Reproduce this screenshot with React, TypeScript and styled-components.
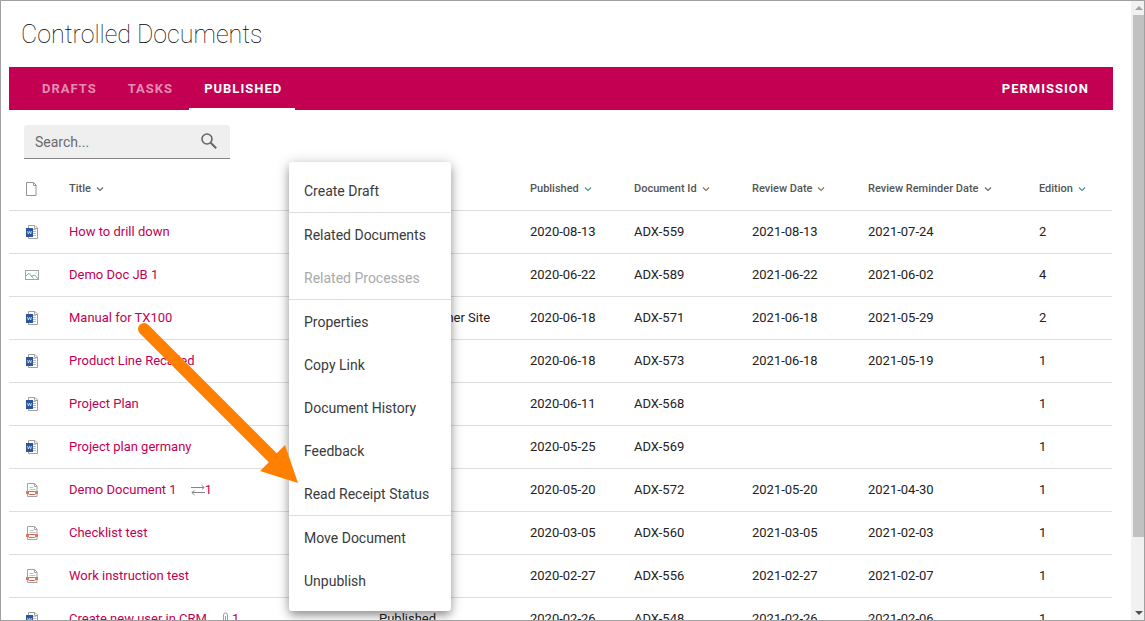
import React from "react";
import styled, { createGlobalStyle } from "styled-components";

const GlobalStyle = createGlobalStyle`
  *, *::before, *::after { box-sizing: border-box; }
  body {
    margin: 0;
    overflow: hidden;
    background: #fff;
    font-family: Roboto, "Liberation Sans", sans-serif;
  }
  button, input { font-family: inherit; }
`;

const Frame = styled.div`
  position: relative;
  display: flex;
  height: 100vh;
  border: 1px solid #a0a0a0;
  overflow: hidden;
`;

const Page = styled.main`
  flex: 1;
  min-width: 0;
  padding: 0 18px 0 8px;
`;

const Heading = styled.h1`
  margin: 0;
  padding: 18px 12px 16px;
  font-size: 25px;
  line-height: 32px;
  font-weight: 100;
  color: #000;
`;

const TabBar = styled.nav`
  display: flex;
  align-items: stretch;
  gap: 3px;
  height: 43px;
  padding: 0 11px 0 18px;
  background: #c30052;
`;

const Tab = styled.button<{ $active?: boolean; $bright?: boolean }>`
  padding: 2px 13px 0 15px;
  border: 0;
  border-bottom: 2px solid ${(p) => (p.$active ? "#fff" : "transparent")};
  background: none;
  font-size: 13px;
  line-height: 16px;
  font-weight: 700;
  letter-spacing: 1px;
  color: ${(p) => (p.$active || p.$bright ? "#fff" : "#e68cb2")};
`;

const Spacer = styled.div`
  flex: 1;
`;

const SearchBox = styled.label`
  display: flex;
  align-items: center;
  width: 206px;
  height: 34px;
  margin: 15px 0 0 15px;
  padding: 0 12px 0 11px;
  border-bottom: 1px solid #858585;
  border-radius: 3px 3px 0 0;
  background: #efefef;
`;

const SearchInput = styled.input`
  flex: 1;
  min-width: 0;
  padding: 0;
  border: 0;
  outline: 0;
  background: none;
  font-size: 14px;
  line-height: 20px;
  color: #333;
  &::placeholder { color: #6a6a6a; opacity: 1; }
`;

const Table = styled.table`
  width: calc(100% - 1px);
  table-layout: fixed;
  border-collapse: separate;
  border-spacing: 0;
  margin-top: 8px;
`;

const Col = styled.col<{ $w?: number }>`
  width: ${(p) => (p.$w ? `${p.$w}px` : "auto")};
`;

const HeadCell = styled.th`
  height: 44px;
  padding: 0;
  border-bottom: 1px solid #dedede;
  text-align: left;
  vertical-align: middle;
  &:first-child { padding-left: 16px; }
`;

const SortButton = styled.button`
  display: flex;
  align-items: center;
  gap: 5px;
  padding: 0;
  border: 0;
  background: none;
  font-size: 11px;
  line-height: 14px;
  font-weight: 500;
  color: #555;
  white-space: nowrap;
`;

const Cell = styled.td`
  height: 43px;
  padding: 0;
  border-bottom: 1px solid #dedede;
  font-size: 13px;
  line-height: 16px;
  color: #222;
  vertical-align: middle;
  white-space: nowrap;
  &:first-child { padding-left: 16px; }
`;

const TitleLine = styled.div`
  display: flex;
  align-items: center;
  gap: 14px;
`;

const DocLink = styled.a`
  color: #c30052;
  text-decoration: none;
`;

const Marker = styled.span`
  display: flex;
  align-items: center;
  color: #c30052;
`;

const Icon = styled.svg`
  display: block;
  flex: none;
`;

const Menu = styled.ul`
  position: absolute;
  left: 288px;
  top: 161px;
  width: 162px;
  margin: 0;
  padding: 7px 0 9px;
  list-style: none;
  background: #fff;
  border-radius: 3px;
  box-shadow: 0 5px 8px -1px rgba(0, 0, 0, 0.3), 0 2px 14px rgba(0, 0, 0, 0.25);
`;

const MenuRow = styled.li<{ $divided?: boolean }>`
  border-bottom: ${(p) => (p.$divided ? "1px solid #dedede" : "0")};
`;

const MenuItem = styled.button`
  display: block;
  width: 100%;
  height: 43px;
  padding: 0 15px;
  border: 0;
  background: none;
  text-align: left;
  font-size: 14px;
  line-height: 20px;
  white-space: nowrap;
  color: #3a3a3a;
  &:disabled { color: #aaa; }
`;

const Pointer = styled.svg`
  position: absolute;
  left: 136px;
  top: 320px;
  pointer-events: none;
`;

const ScrollTrack = styled.div`
  display: flex;
  flex-direction: column;
  width: 13px;
  background: #f1f1f1;
`;

const ScrollArrow = styled.div`
  display: flex;
  align-items: center;
  justify-content: flex-end;
  height: 14px;
  padding-right: 1px;
`;

const ScrollThumb = styled.div`
  flex: 522;
  margin-left: 2px;
  background: #c1c1c1;
`;

const ScrollRest = styled.div`
  flex: 69;
`;

type Kind = "word" | "image" | "pdf";

const FileIcon = ({ kind }: { kind: Kind }) => {
  if (kind === "image")
    return (
      <Icon width="14" height="14" viewBox="0 0 14 14" fill="none">
        <rect x="0.5" y="2.5" width="13" height="9" stroke="#a3a3a3" />
        <path d="M1 8 L4 5.3 L8.5 10.5 M6.5 8.3 L9.5 7 L13 10.8" stroke="#5fb59c" />
        <circle cx="11" cy="5" r="0.8" fill="#eddca8" />
      </Icon>
    );
  if (kind === "word")
    return (
      <Icon width="14" height="14" viewBox="0 0 14 14" fill="none">
        <path d="M3.5 3 V0.5 H10 L12.5 3 V13.5 H3.5 V11" fill="#fff" stroke="#a0a0a0" />
        <path d="M9.5 0.5 V3.5 H12" stroke="#a8a8a8" />
        <path d="M7.5 4.5 H11 M7.5 6.5 H11 M7.5 8.5 H11 M7.5 10.5 H11" stroke="#bdbdbd" />
        <rect x="1" y="3" width="7" height="9" fill="#2b579a" />
        <path d="M2.6 6 L3.3 9 L4.5 6.4 L5.7 9 L6.4 6" stroke="#dbe4f3" strokeWidth="0.8" />
      </Icon>
    );
  return (
    <Icon width="14" height="14" viewBox="0 0 14 14" fill="none">
      <path d="M2.5 0.5 H9.5 L12 3 V13.5 H2.5 Z" fill="#fff" stroke="#a3a3a3" />
      <path d="M9.5 0.5 V3.5 H12" stroke="#a3a3a3" />
      <path d="M4.5 4.5 H8.5 M4.5 6.5 H10.5" stroke="#c4c4c4" />
      <path d="M1 8 H13 V11 H1 Z" fill="#e0755c" />
      <rect x="3.5" y="8.5" width="7" height="3" rx="1" fill="#fff" stroke="#dd6248" />
    </Icon>
  );
};

const Chevron = ({ color = "#666" }: { color?: string }) => (
  <Icon width="8" height="6" viewBox="0 0 8 6" fill="none">
    <path d="M1 1.5 L4 4.5 L7 1.5" stroke={color} strokeWidth="1.1" />
  </Icon>
);

const LinkCountIcon = () => (
  <Icon width="14" height="12" viewBox="0 0 14 12" fill="none" stroke="#858585">
    <path d="M0 3.5 H13 M10.5 1 L13.2 3.5 L11 5.5 M14 8.5 H1 M3.5 6.5 L0.8 8.5 L3.5 11" />
  </Icon>
);

const ClipIcon = () => (
  <Icon width="11" height="14" viewBox="0 0 11 14" fill="none">
    <path d="M2.5 11 V3 Q2.5 1 4.5 1 Q6.5 1 6.5 3 V11 Q6.5 13 5.5 13 Q4.5 13 4.5 11 V4" stroke="#b09a80" />
  </Icon>
);

interface Doc {
  kind: Kind;
  title: string;
  mark?: "links" | "clip";
  state?: string;
  published: string;
  id: string;
  review: string;
  reminder: string;
  edition: number;
}

const docs: Doc[] = [
  { kind: "word", title: "How to drill down", published: "2020-08-13", id: "ADX-559", review: "2021-08-13", reminder: "2021-07-24", edition: 2 },
  { kind: "image", title: "Demo Doc JB 1", published: "2020-06-22", id: "ADX-589", review: "2021-06-22", reminder: "2021-06-02", edition: 4 },
  { kind: "word", title: "Manual for TX100", state: "Product Owner Site", published: "2020-06-18", id: "ADX-571", review: "2021-06-18", reminder: "2021-05-29", edition: 2 },
  { kind: "word", title: "Product Line Recalled", published: "2020-06-18", id: "ADX-573", review: "2021-06-18", reminder: "2021-05-19", edition: 1 },
  { kind: "word", title: "Project Plan", published: "2020-06-11", id: "ADX-568", review: "", reminder: "", edition: 1 },
  { kind: "word", title: "Project plan germany", published: "2020-05-25", id: "ADX-569", review: "", reminder: "", edition: 1 },
  { kind: "pdf", title: "Demo Document 1", mark: "links", published: "2020-05-20", id: "ADX-572", review: "2021-05-20", reminder: "2021-04-30", edition: 1 },
  { kind: "pdf", title: "Checklist test", published: "2020-03-05", id: "ADX-560", review: "2021-03-05", reminder: "2021-02-03", edition: 1 },
  { kind: "pdf", title: "Work instruction test", published: "2020-02-27", id: "ADX-556", review: "2021-02-27", reminder: "2021-02-07", edition: 1 },
  { kind: "word", title: "Create new user in CRM", mark: "clip", state: "Published", published: "2020-02-26", id: "ADX-548", review: "2021-02-26", reminder: "2021-02-06", edition: 1 },
];

const columns = [
  { label: "Title", color: "#666" },
  { label: "", color: "" },
  { label: "Published", color: "#4a8f8c" },
  { label: "Document Id", color: "#8a7355" },
  { label: "Review Date", color: "#8a7355" },
  { label: "Review Reminder Date", color: "#666" },
  { label: "Edition", color: "#4a8f8c" },
];

const menu = [
  { label: "Create Draft", divided: true },
  { label: "Related Documents" },
  { label: "Related Processes", disabled: true, divided: true },
  { label: "Properties" },
  { label: "Copy Link" },
  { label: "Document History" },
  { label: "Feedback" },
  { label: "Read Receipt Status", divided: true },
  { label: "Move Document" },
  { label: "Unpublish" },
];

export default function App() {
  return (
    <>
      <GlobalStyle />
      <Frame>
        <Page>
          <Heading>Controlled Documents</Heading>
          <TabBar>
            <Tab>DRAFTS</Tab>
            <Tab>TASKS</Tab>
            <Tab $active>PUBLISHED</Tab>
            <Spacer />
            <Tab $bright>PERMISSION</Tab>
          </TabBar>
          <SearchBox>
            <SearchInput type="text" placeholder="Search..." aria-label="Search" />
            <Icon width="18" height="18" viewBox="0 0 18 18" fill="none" stroke="#666" strokeWidth="1.6">
              <circle cx="7" cy="6" r="5" />
              <path d="M10.7 9.7 L16.2 15.2" strokeWidth="2" />
            </Icon>
          </SearchBox>
          <Table>
            <colgroup>
              <Col $w={60} />
              <Col />
              <Col $w={151} />
              <Col $w={104} />
              <Col $w={118} />
              <Col $w={116} />
              <Col $w={171} />
              <Col $w={73} />
            </colgroup>
            <thead>
              <tr>
                <HeadCell>
                  <Icon width="12" height="14" viewBox="0 0 12 14" fill="none" stroke="#949494">
                    <path d="M1.5 0.5 H8.5 L11 3 V13.5 H1.5 Z" />
                    <path d="M8.5 0.5 V3.5 H11" />
                  </Icon>
                </HeadCell>
                {columns.map((c, i) => (
                  <HeadCell key={i}>
                    {c.label && (
                      <SortButton>
                        {c.label}
                        <Chevron color={c.color} />
                      </SortButton>
                    )}
                  </HeadCell>
                ))}
              </tr>
            </thead>
            <tbody>
              {docs.map((d) => (
                <tr key={d.id}>
                  <Cell>
                    <FileIcon kind={d.kind} />
                  </Cell>
                  <Cell>
                    <TitleLine>
                      <DocLink href="#">{d.title}</DocLink>
                      {d.mark && (
                        <Marker>
                          {d.mark === "links" ? <LinkCountIcon /> : <ClipIcon />}1
                        </Marker>
                      )}
                    </TitleLine>
                  </Cell>
                  <Cell>{d.state}</Cell>
                  <Cell>{d.published}</Cell>
                  <Cell>{d.id}</Cell>
                  <Cell>{d.review}</Cell>
                  <Cell>{d.reminder}</Cell>
                  <Cell>{d.edition}</Cell>
                </tr>
              ))}
            </tbody>
          </Table>
        </Page>
        <ScrollTrack>
          <ScrollArrow>
            <Icon width="8" height="4" viewBox="0 0 8 4">
              <path d="M0 4 L4 0 L8 4 Z" fill="#a3a3a3" />
            </Icon>
          </ScrollArrow>
          <ScrollThumb />
          <ScrollRest />
          <ScrollArrow>
            <Icon width="8" height="4" viewBox="0 0 8 4">
              <path d="M0 0 L4 4 L8 0 Z" fill="#505050" />
            </Icon>
          </ScrollArrow>
        </ScrollTrack>
        <Menu>
          {menu.map((m) => (
            <MenuRow key={m.label} $divided={m.divided}>
              <MenuItem disabled={m.disabled}>{m.label}</MenuItem>
            </MenuRow>
          ))}
        </Menu>
        <Pointer width="164" height="166" viewBox="137 321 164 166">
          <path d="M144 329 L276 461" stroke="#ff8000" strokeWidth="12" strokeLinecap="round" />
          <path d="M298 483 L285 445 L277 453 L269 462 L260 471 Z" fill="#ff8000" />
        </Pointer>
      </Frame>
    </>
  );
}
